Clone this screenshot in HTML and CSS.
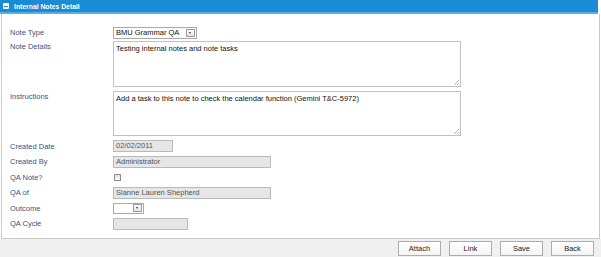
FILE: index.html
```html
<!DOCTYPE html>
<html>
<head>
<meta charset="utf-8">
<link rel="stylesheet" href="styles.css">
</head>
<body>
<div class="page">
  <div class="panel-head"><span class="toggle"></span><span class="title">Internal Notes Detail</span></div>
  <div class="panel">
    <div class="form">
      <div class="row"><span class="label">Note Type</span>
        <div class="select sel-type"><span class="sel-text">BMU Grammar QA</span><span class="arrow"></span></div></div>
      <div class="row row-area"><span class="label">Note Details</span>
        <div class="area area1">Testing internal notes and note tasks<span class="grip"></span></div></div>
      <div class="row row-area row-area2"><span class="label">Instructions</span>
        <div class="area area2">Add a task to this note to check the calendar function (Gemini T&amp;C-5972)<span class="grip"></span></div></div>
      <div class="row row-first"><span class="label">Created Date</span>
        <div class="field w-date">02/02/2011</div></div>
      <div class="row"><span class="label">Created By</span>
        <div class="field w-long">Administrator</div></div>
      <div class="row"><span class="label">QA Note?</span>
        <span class="check"></span></div>
      <div class="row"><span class="label">QA of</span>
        <div class="field w-long">Sianne Lauren Shepherd</div></div>
      <div class="row"><span class="label">Outcome</span>
        <div class="select sel-outcome"><span class="sel-text"></span><span class="arrow"></span></div></div>
      <div class="row"><span class="label">QA Cycle</span>
        <div class="field w-cycle"></div></div>
    </div>
  </div>
  <div class="footer">
    <button class="btn">Attach</button>
    <button class="btn">Link</button>
    <button class="btn">Save</button>
    <button class="btn">Back</button>
  </div>
</div>
</body>
</html>
```
FILE: styles.css
```css
html, body {
  margin: 0;
  padding: 0;
  background: #ffffff;
  font-family: "Liberation Sans", Arial, sans-serif;
  font-size: 7.5px;
  color: #222;
}
.page {
  width: 601px;
  height: 257px;
  display: flex;
  flex-direction: column;
}
.panel-head {
  width: 598px;
  height: 12px;
  background: #1b8bd6;
  border-bottom: 2px solid #5aaee4;
  display: flex;
  align-items: center;
  color: #fff;
  font-weight: bold;
  font-size: 6.8px;
}
.toggle {
  width: 6px;
  height: 6px;
  margin: 0 5px 0 3px;
  background: #fff;
  border-radius: 1px;
  position: relative;
}
.toggle::after {
  content: "";
  position: absolute;
  left: 1px;
  right: 1px;
  top: 2.5px;
  height: 1px;
  background: #1b8bd6;
}
.panel {
  margin-left: 1px;
  width: 597px;
  border-left: 1px solid #c9c9c9;
  border-right: 1px solid #c9c9c9;
  border-bottom: 1px solid #c9c9c9;
  background: #fff;
}
.form {
  padding: 11px 0 6px 8px;
  display: flex;
  flex-direction: column;
}
.row {
  display: grid;
  grid-template-columns: 103px auto;
  align-items: center;
  justify-items: start;
  height: 15.5px;
}
.label {
  color: #34548a;
  font-size: 7.5px;
}
.row-area {
  height: auto;
  align-items: start;
}
.row-area .label {
  padding-top: 1px;
}
.row-area2 {
  margin-top: 4px;
}
.row-first {
  margin-top: 3px;
}
.select {
  box-sizing: border-box;
  height: 12px;
  border: 1px solid #a9a9a9;
  background: #fff;
  display: flex;
  align-items: center;
  justify-content: space-between;
  padding: 0 1px 0 2px;
}
.sel-type { width: 84px; }
.sel-outcome { width: 31px; height: 11px; }
.sel-text {
  color: #111;
}
.arrow {
  box-sizing: border-box;
  width: 9px;
  height: 8px;
  border: 1px solid #9a9a9a;
  background: linear-gradient(#fdfdfd, #e4e4e4);
  position: relative;
}
.arrow::after {
  content: "";
  position: absolute;
  left: 2px;
  top: 2px;
  border-left: 1.5px solid transparent;
  border-right: 1.5px solid transparent;
  border-top: 2px solid #333;
}
.area {
  box-sizing: border-box;
  width: 348px;
  border: 1px solid #c2c2c2;
  background: #fff;
  padding: 2px 2px;
  color: #111;
  position: relative;
}
.area1 { height: 46px; }
.area2 { height: 45px; }
.grip {
  position: absolute;
  right: 1px;
  bottom: 1px;
  width: 5px;
  height: 5px;
  background: linear-gradient(135deg, transparent 0 45%, #b5b5b5 45% 58%, transparent 58% 72%, #b5b5b5 72% 85%, transparent 85%);
}
.field {
  box-sizing: border-box;
  height: 12px;
  border: 1px solid #b9b9b9;
  background: #e6e6e6;
  color: #555;
  padding: 0 2px;
  line-height: 10px;
}
.w-date { width: 60px; }
.w-long { width: 158px; }
.w-cycle { width: 75px; }
.check {
  box-sizing: border-box;
  width: 7px;
  height: 7px;
  margin-left: 1px;
  border: 1px solid #8e8e8e;
  background: linear-gradient(#e2e2e2, #fafafa);
}
.footer {
  flex: 1;
  background: #f0f0f0;
  display: flex;
  justify-content: flex-end;
  align-items: flex-start;
  gap: 8px;
  padding: 2px 7px 0 0;
}
.btn {
  box-sizing: border-box;
  width: 43px;
  height: 15px;
  border: 1px solid #acacac;
  background: linear-gradient(#ffffff, #f4f4f4);
  font-family: "Liberation Sans", Arial, sans-serif;
  font-size: 7.5px;
  color: #222;
  padding: 0;
  margin: 0;
}
```
